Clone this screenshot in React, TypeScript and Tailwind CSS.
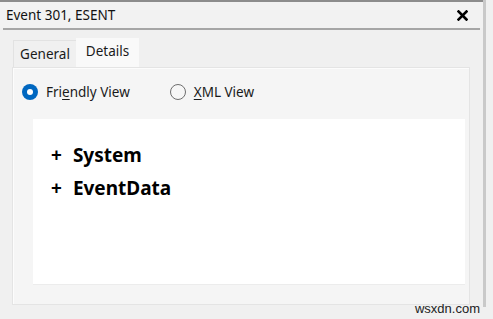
import React from 'react'

// ─── Radio ──────────────────────────────────────────────────────────────

function Radio({ checked, label, mnemonic }: { checked: boolean; label: string; mnemonic: number }) {
  const before = label.slice(0, mnemonic)
  const key = label[mnemonic]
  const after = label.slice(mnemonic + 1)
  return (
    <div className="flex items-center gap-[8px]">
      {checked ? (
        <span className="flex h-[16px] w-[16px] items-center justify-center rounded-full bg-[#0067c0]">
          <span className="h-[6px] w-[6px] rounded-full bg-white" />
        </span>
      ) : (
        <span className="h-[16px] w-[16px] rounded-full border border-[#6e6e6e] bg-[#f6f6f6]" />
      )}
      <span className="text-[13.5px] text-[#1a1a1a]">
        {before}
        <span className="underline underline-offset-2">{key}</span>
        {after}
      </span>
    </div>
  )
}

// ─── App ────────────────────────────────────────────────────────────────

export default function App() {
  return (
    <div
      className="relative h-[319px] w-[493px] overflow-hidden bg-[#f0f0f0]"
      style={{ fontFamily: '"Noto Sans", "Open Sans", sans-serif' }}
    >
      <div className="h-[307px] w-[486px] border-r-[3px] border-[#c9c9c9]">
        {/* Title bar */}
        <div className="flex h-[28px] items-center justify-between border-t-2 border-[#8c8c8c] bg-[#f2f2f2] pl-[6px] pr-[15px]">
          <span className="text-[13.5px] text-[#111]">Event 301, ESENT</span>
          <svg width="11" height="11" viewBox="0 0 11 11">
            <path d="M1.5 1.5 L9.5 9.5 M9.5 1.5 L1.5 9.5" stroke="#000" strokeWidth="2.6" strokeLinecap="square" />
          </svg>
        </div>
        <div className="mx-[3px] h-[2px] w-[477px] bg-[#a6a6a6]" />

        {/* Tabs */}
        <div className="pl-[12px] pr-[13px] pt-[8px]">
          <div className="flex h-[29px] items-end">
            <div className="ml-[1px] flex h-[27px] w-[63px] items-center justify-center border-t border-l border-[#e2e2e2] bg-[#f0f0f0] text-[13.5px] text-[#1a1a1a]">
              General
            </div>
            <div className="flex h-[29px] w-[63px] items-center justify-center bg-[#f9f9f9] pb-[3px] text-[13.5px] text-[#1a1a1a]">
              Details
            </div>
          </div>

          {/* Tab panel */}
          <div className="h-[238px] border border-[#e4e4e4] bg-[#f5f5f5] px-[20px] pt-[12px] shadow-[inset_1px_1px_0_#fcfcfc]">
            <div className="-ml-[11px] flex h-[24px] items-center gap-[40px]">
              <Radio checked label="Friendly View" mnemonic={3} />
              <Radio checked={false} label="XML View" mnemonic={0} />
            </div>
            <div className="mt-[15px] h-[166px] w-[432px] border-b border-[#ececec] bg-white pl-[18px] pt-[20px]">
              <div className="flex h-[33px] items-center gap-[11px] text-[19px] font-bold text-black">
                <span>+</span>
                <span>System</span>
              </div>
              <div className="flex h-[33px] items-center gap-[11px] text-[19px] font-bold text-black">
                <span>+</span>
                <span>EventData</span>
              </div>
            </div>
          </div>
        </div>
      </div>

      <span
        className="absolute bottom-[1px] right-[13px] text-[13px] text-[#222]"
        style={{ fontFamily: '"Liberation Sans", Arial, sans-serif' }}
      >
        wsxdn.com
      </span>
    </div>
  )
}
